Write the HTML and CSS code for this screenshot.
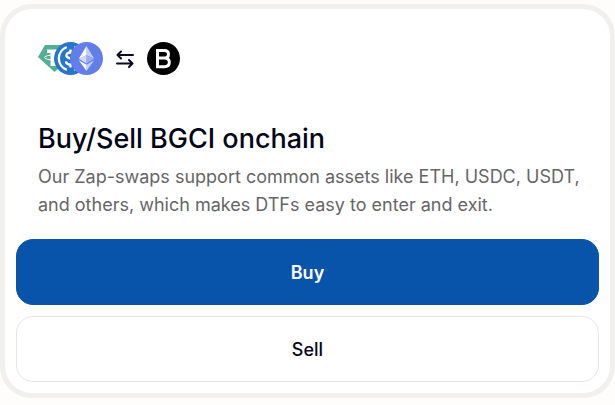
FILE: index.html
```html
<!DOCTYPE html>
<html lang="en">
<head>
<meta charset="UTF-8">
<meta name="viewport" content="width=device-width, initial-scale=1.0">
<title>Buy/Sell BGCI onchain</title>
<link rel="stylesheet" href="styles.css">
</head>
<body>
<section class="card">
  <div class="info">
    <div class="tokens">
      <div class="stack">
        <svg class="token" viewBox="0 0 33 33" role="img" aria-label="USDT">
          <path d="M7 3h19l7 12-16.500 15L0 15z" fill="#50af95"/>
          <path d="M9 7.500h15v3.500h-5.500v13h-6V11H9z" fill="#fff"/>
          <ellipse cx="16.500" cy="15.500" rx="10" ry="2.500" fill="none" stroke="#fff" stroke-width="1"/>
        </svg>
        <svg class="token" viewBox="0 0 33 33" role="img" aria-label="USDC">
          <circle cx="16.500" cy="16.500" r="16.500" fill="#2775ca"/>
          <g fill="none" stroke="#fff" stroke-width="2.400">
            <path d="M12.800 5.200a12 12 0 0 0 0 22.600M20.200 5.200a12 12 0 0 1 0 22.600"/>
            <path d="M20.700 13.500c-.3-2-1.800-3-4.200-3-2.500 0-4.100 1.100-4.100 3 0 4.300 8.600 1.700 8.600 6 0 2-1.800 3.200-4.500 3.200s-4.300-1.200-4.500-3.300M16.500 7.500v3M16.500 22.500v3"/>
          </g>
        </svg>
        <svg class="token" viewBox="0 0 33 33" role="img" aria-label="ETH">
          <circle cx="16.500" cy="16.500" r="16.500" fill="#627eea"/>
          <path d="M16.500 4v9.300l7.700 3.500z" fill="#c4cff8"/>
          <path d="M16.500 4L8.800 16.800l7.700-3.500z" fill="#fff"/>
          <path d="M16.500 21.400l7.700-4.600-7.700-3.500z" fill="#98aaf2"/>
          <path d="M8.800 16.800l7.700 4.600v-8.100z" fill="#d0d8fa"/>
          <path d="M16.500 29v-6.200l7.700-4.500z" fill="#c4cff8"/>
          <path d="M16.500 29v-6.200l-7.700-4.500z" fill="#fff"/>
        </svg>
      </div>
      <svg class="swap" viewBox="0 0 18 18" aria-hidden="true">
        <path d="M17 5H1.500M5 1.500L1.500 5 5 8.500M1 13.500h15.500M13 10l3.500 3.500L13 17"/>
      </svg>
      <svg class="token" viewBox="0 0 33 33" role="img" aria-label="BGCI">
        <circle cx="16.500" cy="16.500" r="16.500" fill="#000"/>
        <path d="M10.500 8.500h6.500c3 0 4.500 1.300 4.500 3.700s-1.500 3.800-4.500 3.800h-6.500zM10.500 16H17.500c3.200 0 4.800 1.400 4.800 4.300s-1.600 4.400-4.800 4.400h-7z" fill="none" stroke="#fff" stroke-width="3"/>
      </svg>
    </div>
    <h2 class="title">Buy/Sell BGCI onchain</h2>
    <p class="text">Our Zap-swaps support common assets like ETH, USDC, USDT, and others, which makes DTFs easy to enter and exit.</p>
  </div>
  <div class="actions">
    <button type="button" class="btn btn-buy">Buy</button>
    <button type="button" class="btn btn-sell">Sell</button>
  </div>
</section>
</body>
</html>
```

FILE: styles.css
```css
* {
  box-sizing: border-box;
}

body {
  margin: 0;
  padding: 4px 0 6px;
  background: #fefdfb;
  font-family: Inter, "Liberation Sans", sans-serif;
  color: #020617;
}

.card {
  padding: 33px 11px 11px;
  background: #fff;
  border: 5px solid #f1f0ee;
  border-radius: 32px;
}

.info {
  padding: 0 11px 0 22px;
}

.tokens {
  display: flex;
  align-items: center;
  gap: 13px;
}

.stack {
  display: flex;
}

.token {
  display: block;
  width: 33px;
  height: 33px;
}

.stack .token + .token {
  margin-left: -17px;
}

.swap {
  width: 18px;
  height: 18px;
  fill: none;
  stroke: #0b0b25;
  stroke-width: 2;
  stroke-linecap: round;
  stroke-linejoin: round;
}

.title {
  margin: 46px 0 6px;
  font-size: 27px;
  font-weight: 500;
  line-height: 36px;
}

.text {
  margin: 0;
  font-size: 18px;
  line-height: 28px;
  color: #666;
}

.actions {
  display: flex;
  flex-direction: column;
  gap: 11px;
  margin-top: 20px;
}

.btn {
  padding: 21px 20px 19px;
  border: 1px solid #e6e6e6;
  border-radius: 17px;
  background: #fff;
  color: #020617;
  font-family: inherit;
  font-size: 18px;
  font-weight: 500;
  line-height: 24px;
  cursor: pointer;
}

.btn-buy {
  background: #0954ab;
  border-color: #0954ab;
  color: #fff;
  font-weight: 600;
}
```
